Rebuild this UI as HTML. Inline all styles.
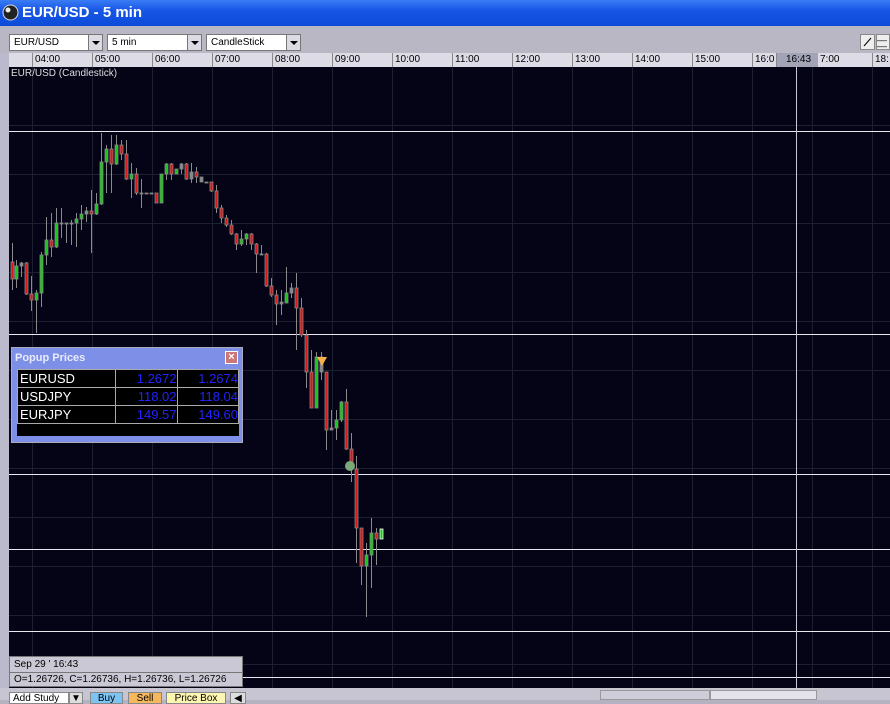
<!DOCTYPE html>
<html><head><meta charset="utf-8"><style>
*{margin:0;padding:0;box-sizing:border-box}
body{width:890px;height:700px;overflow:hidden;background:#b4b2c0;font-family:"Liberation Sans",sans-serif;position:relative}
.abs{position:absolute}
#title{left:0;top:0;width:890px;height:26px;background:linear-gradient(#3a7cf5,#1756e6 40%,#0d4bd8);color:#fff;font-weight:bold;font-size:15px}
#title span{position:absolute;left:22px;top:4px}
#tb{left:0;top:26px;width:890px;height:27px;background:#b9b7c4}
.dd{position:absolute;top:34px;height:17px;background:#fff;border:1px solid #777;font-size:10px;padding:2px 0 0 4px}
.dd b{position:absolute;right:0;top:0;width:14px;height:15px;background:#dcdbe4;border-left:1px solid #777}
.dd b:after{content:"";position:absolute;left:3px;top:6px;border-left:4px solid transparent;border-right:4px solid transparent;border-top:4px solid #000}
#axis{left:9px;top:53px;width:881px;height:14px;background:#dddce6;font-size:10px}
#axis div{position:absolute;top:0;height:14px;border-left:1px solid #888;padding-left:2px;line-height:14px}
#chart{left:9px;top:67px}
#left{left:0;top:53px;width:9px;height:637px;background:#bbb9cc}
#bot{left:0;top:688px;width:890px;height:12px;background:#c7c5d2}
.btn{position:absolute;top:692px;height:12px;font-size:10px;border:1px solid #888;text-align:center;line-height:12px;overflow:hidden}
</style></head><body>
<div id="title" class="abs"><svg class="abs" style="left:2px;top:4px" width="17" height="17"><circle cx="8.5" cy="8.5" r="7.5" fill="#222" stroke="#ddd"/><circle cx="6" cy="6" r="2.5" fill="#eee"/></svg><span>EUR/USD - 5 min</span></div>
<div id="tb" class="abs"></div>
<div class="dd" style="left:9px;width:94px">EUR/USD<b></b></div>
<div class="dd" style="left:107px;width:95px">5 min<b></b></div>
<div class="dd" style="left:206px;width:95px">CandleStick<b></b></div>
<div class="abs" style="left:860px;top:34px;width:15px;height:16px;background:#eee;border:1px solid #888"><svg width="13" height="14"><line x1="3" y1="11" x2="10" y2="3" stroke="#000"/></svg></div>
<div class="abs" style="left:876px;top:34px;width:14px;height:16px;background:#eee;border:1px solid #888;font-size:9px;line-height:6px;padding-top:2px">&#8211;&#8211;<br>&#8211;&#8211;</div>
<div id="left" class="abs"></div>
<div id="axis" class="abs">
<div style="left:23px">04:00</div><div style="left:83px">05:00</div><div style="left:143px">06:00</div><div style="left:203px">07:00</div><div style="left:263px">08:00</div><div style="left:323px">09:00</div><div style="left:383px">10:00</div><div style="left:443px">11:00</div><div style="left:503px">12:00</div><div style="left:563px">13:00</div><div style="left:623px">14:00</div><div style="left:683px">15:00</div><div style="left:743px">16:0</div><div style="left:767px;width:42px;background:#a3a3b8;text-align:center">16:43</div><div style="left:809px;border:none">7:00</div><div style="left:863px">18:</div>
</div>
<svg id="chart" class="abs" width="881" height="621" style="background:#040416"></svg>
<div class="abs" style="left:11px;top:68px;color:#ddd;font-size:10px">EUR/USD (Candlestick)</div>
<div class="abs" style="left:11px;top:347px;width:232px;height:96px;background:#7d8fe6;border:1px solid #aab">
<div style="position:absolute;left:3px;top:4px;color:#e8ecff;font-weight:bold;font-size:11px">Popup Prices</div>
<div style="position:absolute;right:4px;top:3px;width:13px;height:13px;background:#c77;border:1px solid #fff;color:#fff;font-size:11px;line-height:11px;text-align:center;font-weight:bold">×</div>
<table style="position:absolute;left:5px;top:21px;width:222px;height:67px;background:#000;border-collapse:collapse;font-size:13px">
<tr style="height:18px"><td style="color:#fff;border:1px solid #aaa;width:98px;padding-left:2px">EURUSD</td><td style="color:#22f;border:1px solid #aaa;text-align:right">1.2672</td><td style="color:#22f;border:1px solid #aaa;text-align:right">1.2674</td></tr>
<tr style="height:18px"><td style="color:#fff;border:1px solid #aaa;padding-left:2px">USDJPY</td><td style="color:#22f;border:1px solid #aaa;text-align:right">118.02</td><td style="color:#22f;border:1px solid #aaa;text-align:right">118.04</td></tr>
<tr style="height:18px"><td style="color:#fff;border:1px solid #aaa;padding-left:2px">EURJPY</td><td style="color:#22f;border:1px solid #aaa;text-align:right">149.57</td><td style="color:#22f;border:1px solid #aaa;text-align:right">149.60</td></tr>
<tr><td colspan="3"></td></tr>
</table></div>
<div class="abs" style="left:9px;top:656px;width:234px;height:31px;background:#c9c8d4;border:1px solid #777;font-size:10px">
<div style="height:16px;padding:2px 0 0 4px;border-bottom:1px solid #777">Sep 29 ' 16:43</div>
<div style="padding:1px 0 0 4px">O=1.26726, C=1.26736, H=1.26736, L=1.26726</div></div>
<div id="bot" class="abs"></div>
<div class="btn" style="left:9px;width:60px;background:#fff;text-align:left;padding-left:3px">Add Study</div>
<div class="btn" style="left:69px;width:14px;background:#ddd">▼</div>
<div class="btn" style="left:90px;width:33px;background:#7cc4f4">Buy</div>
<div class="btn" style="left:128px;width:34px;background:#f5b85c">Sell</div>
<div class="btn" style="left:166px;width:60px;background:#fdf6b0">Price Box</div>
<div class="btn" style="left:230px;width:16px;background:#ddd">◀</div>
<div class="abs" style="left:600px;top:690px;width:110px;height:10px;background:#cfcdda;border:1px solid #999"></div>
<div class="abs" style="left:710px;top:690px;width:107px;height:10px;background:#e4e3ec;border:1px solid #999"></div>
<script>
var s='',W=881,H=621,oy=67,ox=9;
for(var x=23;x<W;x+=60)s+='<line x1="'+(x+.5)+'" y1="0" x2="'+(x+.5)+'" y2="'+H+'" stroke="#1c2030"/>';
for(var y=125;y<690;y+=49)s+='<line x1="0" y1="'+(y-oy+.5)+'" x2="'+W+'" y2="'+(y-oy+.5)+'" stroke="#1c2030"/>';
[131,334,474,549,631,677].forEach(function(y){s+='<line x1="0" y1="'+(y-oy+.5)+'" x2="'+W+'" y2="'+(y-oy+.5)+'" stroke="#e8e8f0"/>';});
s+='<line x1="'+(796-ox+.5)+'" y1="0" x2="'+(796-ox+.5)+'" y2="'+H+'" stroke="#c8c8d8"/>';
var c=[[12,262,279,243,290,'r'],[16,266,279,260,288,'g'],[21,263,266,262,277,'n'],[26,263,294,262,295,'r'],[31,294,300,276,311,'r'],[36,293,300,290,333,'g'],[41,255,293,252,307,'g'],[46,240,255,217,265,'g'],[51,240,247,213,257,'r'],[56,223,247,208,248,'g'],[61,223,224,208,238,'n'],[66,223,224,223,243,'n'],[71,223,224,220,245,'n'],[76,219,223,213,247,'g'],[81,214,219,205,230,'g'],[86,211,214,207,222,'n'],[91,211,214,190,253,'r'],[96,204,214,193,215,'g'],[101,162,204,133,205,'g'],[106,149,162,145,193,'g'],[111,149,164,135,193,'r'],[116,145,164,135,165,'g'],[121,145,154,140,160,'r'],[126,154,179,140,180,'r'],[131,174,179,163,198,'g'],[136,174,193,168,195,'r'],[141,193,193,179,208,'n'],[146,193,193,193,193,'n'],[151,193,193,193,193,'n'],[156,193,203,193,203,'r'],[161,174,203,174,203,'g'],[166,164,174,163,180,'g'],[171,164,174,163,180,'r'],[176,169,174,169,174,'g'],[181,164,169,163,174,'n'],[186,164,179,163,180,'r'],[191,172,179,163,183,'n'],[196,172,177,167,183,'r'],[201,177,182,177,182,'n'],[206,182,182,182,182,'n'],[211,182,191,182,192,'r'],[216,191,208,185,213,'r'],[221,208,218,205,223,'r'],[226,218,225,215,227,'r'],[231,225,234,220,235,'r'],[236,234,244,233,250,'r'],[241,239,244,230,246,'g'],[246,234,239,233,245,'g'],[251,234,244,233,250,'r'],[256,244,254,243,273,'r'],[261,254,254,245,255,'n'],[266,254,286,253,287,'r'],[271,286,295,278,297,'r'],[276,295,304,290,325,'r'],[281,302,304,290,315,'n'],[286,293,303,267,303,'g'],[291,288,293,283,298,'n'],[296,288,308,273,350,'r'],[301,308,335,298,337,'r'],[306,335,372,330,388,'r'],[311,372,408,350,408,'r'],[316,357,408,352,408,'g'],[321,357,372,352,380,'n'],[326,372,430,372,450,'r'],[331,428,430,410,430,'n'],[336,420,428,410,440,'g'],[341,402,420,401,422,'g'],[346,402,449,389,450,'r'],[351,449,462,433,482,'r'],[356,469,528,456,563,'r'],[361,528,566,528,585,'r'],[366,555,566,543,617,'g'],[371,533,555,518,588,'g'],[376,533,539,528,565,'r'],[381,529,539,529,539,'w']];
c.forEach(function(k){var x=k[0]-ox,o=Math.min(k[1],k[2])-oy,cl=Math.max(k[1],k[2])-oy,h=k[3]-oy,l=k[4]-oy;
s+='<line x1="'+(x+.5)+'" y1="'+h+'" x2="'+(x+.5)+'" y2="'+l+'" stroke="#8a8a8a"/>';
var f=k[5]=='r'?'#d81818':(k[5]=='g'||k[5]=='w')?'#18c818':'#888';
var hh=Math.max(cl-o,1);
s+='<rect x="'+(x-1)+'" y="'+o+'" width="3" height="'+hh+'" fill="'+f+'" stroke="'+(k[5]=='w'?'#fff':'#888')+'" stroke-width="0.8"/>';});
s+='<polygon points="'+(317-ox)+','+(357-oy)+' '+(327-ox)+','+(357-oy)+' '+(322-ox)+','+(366-oy)+'" fill="#f5b04a"/>';
s+='<circle cx="'+(350-ox)+'" cy="'+(466-oy)+'" r="5" fill="#7aa878"/>';
document.getElementById('chart').innerHTML=s;
</script>
</body></html>
